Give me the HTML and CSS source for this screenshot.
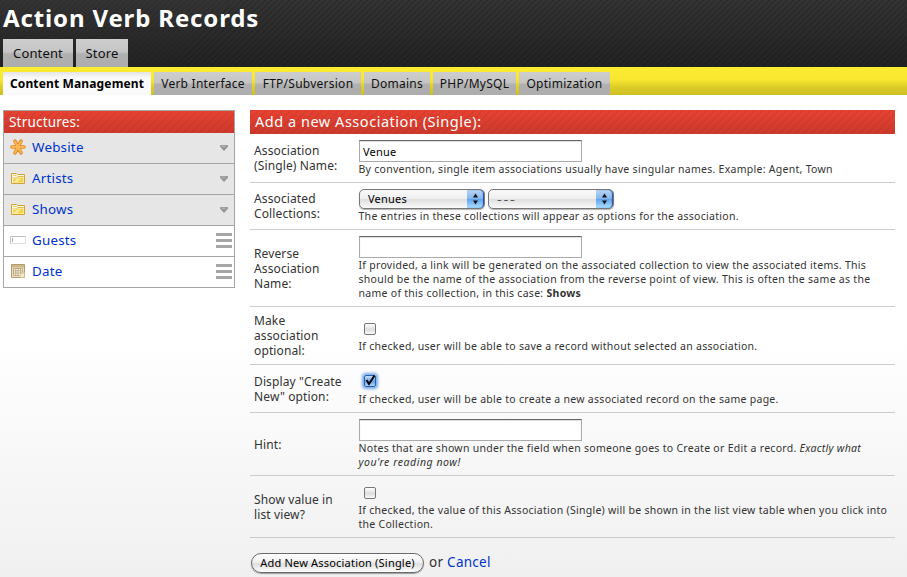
FILE: index.html
```html
<!DOCTYPE html>
<html lang="en">
<head>
<meta charset="utf-8">
<title>Action Verb Records</title>
<link rel="stylesheet" href="styles.css">
</head>
<body>
<header class="masthead">
  <h1 class="site-title">Action Verb Records</h1>
  <nav class="main-tabs">
    <a class="tab t-content"><span>Content</span></a>
    <a class="tab t-store"><span>Store</span></a>
  </nav>
</header>
<nav class="sub-tabs">
  <a class="tab active s-content"><span>Content Management</span></a>
  <a class="tab s-verb"><span>Verb Interface</span></a>
  <a class="tab s-ftp"><span>FTP/Subversion</span></a>
  <a class="tab s-domains"><span>Domains</span></a>
  <a class="tab s-php"><span>PHP/MySQL</span></a>
  <a class="tab s-opt"><span>Optimization</span></a>
</nav>
<main class="columns">
  <aside class="structures">
    <h2 class="bar">Structures:</h2>
    <ul class="tree">
      <li class="group">
        <svg class="icon" viewBox="0 0 16 16"><g stroke="#e08a2c" stroke-width="3.600" stroke-linecap="round"><path d="M2 8h12M5 2.200l6 11.600M11 2.200L5 13.800"/></g><g stroke="#fdb64e" stroke-width="2" stroke-linecap="round"><path d="M2.200 8h11.600M5 2.500l6 11M11 2.500L5 13.500"/></g></svg>
        <a>Website</a>
        <svg class="arrow" viewBox="0 0 8 6"><path d="M.5.5h7v1.200L4 5.500.5 1.700z" fill="#999" stroke="#777" stroke-width=".6"/><path d="M1.500 1.200h4" stroke="#ccc" stroke-width=".7"/></svg>
      </li>
      <li class="group">
        <svg class="icon" viewBox="0 0 16 16"><path d="M1.500 13.500v-10h5l1 1h7v9z" fill="#fffbe6" stroke="#d9a036"/><path d="M3 5h3.500l.5 1H3z" fill="#f2cf58"/><path d="M3 12.500V9h4l1-1.500h5.500v5z" fill="#f4d445"/><path d="M3 12.500l4-3.500 4-1-4 4.500z" fill="#fbeb9a"/><path d="M2.500 8h4.300l1-1.500h6" fill="none" stroke="#e3b443" stroke-width=".9"/></svg>
        <a>Artists</a>
        <svg class="arrow" viewBox="0 0 8 6"><path d="M.5.5h7v1.200L4 5.500.5 1.700z" fill="#999" stroke="#777" stroke-width=".6"/><path d="M1.500 1.200h4" stroke="#ccc" stroke-width=".7"/></svg>
      </li>
      <li class="group">
        <svg class="icon" viewBox="0 0 16 16"><path d="M1.500 13.500v-10h5l1 1h7v9z" fill="#fffbe6" stroke="#d9a036"/><path d="M3 5h3.500l.5 1H3z" fill="#f2cf58"/><path d="M3 12.500V9h4l1-1.500h5.500v5z" fill="#f4d445"/><path d="M3 12.500l4-3.500 4-1-4 4.500z" fill="#fbeb9a"/><path d="M2.500 8h4.300l1-1.500h6" fill="none" stroke="#e3b443" stroke-width=".9"/></svg>
        <a>Shows</a>
        <svg class="arrow" viewBox="0 0 8 6"><path d="M.5.5h7v1.200L4 5.500.5 1.700z" fill="#999" stroke="#777" stroke-width=".6"/><path d="M1.500 1.200h4" stroke="#ccc" stroke-width=".7"/></svg>
      </li>
      <li>
        <svg class="icon" viewBox="0 0 16 16"><path d="M.5 4.500h15v7H.5z" fill="#fff" stroke="#ddd"/><path d="M.5 11.500v-7h15" fill="none" stroke="#c2c2c2"/><path d="M2.500 6v4" stroke="#aaa"/></svg>
        <a>Guests</a>
        <i class="grip"></i>
      </li>
      <li>
        <svg class="icon" viewBox="0 0 16 16"><path d="M1.500 1.500h13v13h-13z" fill="#e9dfc3" stroke="#b59c6d"/><path d="M2 2h12v2.500H2z" fill="#cdb88c"/><path d="M3.500 5.500h9v7h-9z" fill="#fffdf4"/><path d="M3.500 5.500h9M3.500 7.800h9M3.500 10.100h9M3.500 12.400h6M3.500 5.500v7M5.800 5.500v7M8.100 5.500v7M10.400 5.500v5M12.500 5.500v4" stroke="#b59c6d" stroke-width=".8"/><path d="M10 14.500l1-4 3.500-1v5z" fill="#f3e8cb" stroke="#cdb88c" stroke-width=".7"/></svg>
        <a>Date</a>
        <i class="grip"></i>
      </li>
    </ul>
  </aside>
  <form class="editor">
    <h2 class="bar">Add a new Association (Single):</h2>
    <div class="row r-name">
      <label>Association<br>(Single) Name:</label>
      <div><input class="text" type="text" value="Venue">
        <p>By convention, single item associations usually have singular names. Example: Agent, Town</p></div>
    </div>
    <div class="row r-coll">
      <label>Associated<br>Collections:</label>
      <div><div class="popups">
          <span class="popup"><span class="value">Venues</span><svg class="stepper" viewBox="0 0 17 18"><path d="M8.500 3.500L11 7.500H6zM8.500 14.500L11 10.500H6z" fill="#111"/></svg></span>
          <span class="popup"><span class="value dashes">---</span><svg class="stepper" viewBox="0 0 17 18"><path d="M8.500 3.500L11 7.500H6zM8.500 14.500L11 10.500H6z" fill="#111"/></svg></span>
        </div>
        <p>The entries in these collections will appear as options for the association.</p></div>
    </div>
    <div class="row r-reverse">
      <label>Reverse<br>Association<br>Name:</label>
      <div><input class="text" type="text">
        <p>If provided, a link will be generated on the associated collection to view the associated items. This<br>should be the name of the association from the reverse point of view. This is often the same as the<br>name of this collection, in this case: <b>Shows</b></p></div>
    </div>
    <div class="row r-optional">
      <label>Make<br>association<br>optional:</label>
      <div><div class="check-line"><span class="check"></span></div>
        <p>If checked, user will be able to save a record without selected an association.</p></div>
    </div>
    <div class="row r-create">
      <label>Display "Create<br>New" option:</label>
      <div><div class="check-line"><span class="check on"><svg viewBox="0 0 16 16"><path d="M4.500 7l2.500 4L12.500 2.500" fill="none" stroke="#000" stroke-width="2"/></svg></span></div>
        <p>If checked, user will be able to create a new associated record on the same page.</p></div>
    </div>
    <div class="row r-hint">
      <label>Hint:</label>
      <div><input class="text" type="text">
        <p>Notes that are shown under the field when someone goes to Create or Edit a record. <em>Exactly what<br><span class="loose">you're reading now!</span></em></p></div>
    </div>
    <div class="row r-show">
      <label>Show value in<br>list view?</label>
      <div><div class="check-line"><span class="check"></span></div>
        <p>If checked, the value of this Association (Single) will be shown in the list view table when you click into<br>the Collection.</p></div>
    </div>
    <div class="actions">
      <button class="submit" type="button">Add New Association (Single)</button>
      <span class="or">or <a>Cancel</a></span>
    </div>
  </form>
</main>
</body>
</html>
```
FILE: styles.css
```css
* { box-sizing: border-box; }
body {
  margin: 0;
  height: 577px;
  overflow: hidden;
  font-family: "Noto Sans", "Open Sans", sans-serif;
  color: #333;
  background: linear-gradient(#fff 0, #fff 340px, #f0f0f0 577px);
}
h1, h2, p, ul { margin: 0; padding: 0; }
a { color: #0033cc; white-space: nowrap; }
.masthead {
  height: 67px;
  display: flex;
  flex-direction: column;
  justify-content: space-between;
  padding-left: 3px;
  background:
    repeating-linear-gradient(135deg, rgba(0,0,0,.13) 0 1.4px, transparent 1.4px 4.243px),
    linear-gradient(#333, #222);
}
.site-title {
  height: 36px;
  font-size: 24px;
  line-height: 35px;
  font-weight: 700;
  color: #fff;
  letter-spacing: .86px;
  white-space: nowrap;
}
.main-tabs, .sub-tabs { display: flex; gap: 3px; }
.tab {
  display: flex;
  align-items: center;
  justify-content: center;
  color: #111;
  background: linear-gradient(#cdcdcd 0, #c6c6c6 45%, #b0b0b0 55%, #adadad 100%);
}
.main-tabs .tab { height: 28px; font-size: 13px; letter-spacing: .15px; }
.t-content { width: 70px; }
.t-store { width: 52px; }
.sub-tabs {
  height: 28px;
  padding: 5px 0 0 3px;
  background: linear-gradient(#fcec32 0, #f8e72f 45%, #d9ca27 75%, #cfc024 100%);
}
.sub-tabs .tab { height: 23px; font-size: 12px; letter-spacing: .25px; }
.sub-tabs .active { font-weight: 700; color: #000; letter-spacing: .14px; background: linear-gradient(#e4e4e4, #fafafa 6px); }
.s-content { width: 148px; }
.s-verb { width: 98px; }
.s-ftp { width: 106px; }
.s-domains { width: 66px; }
.s-php { width: 83px; }
.s-opt { width: 91px; }
.columns {
  display: grid;
  grid-template-columns: 232px 645px;
  column-gap: 15px;
  align-items: start;
  padding: 15px 0 0 3px;
}
.bar {
  padding-left: 5px;
  font-size: 14.5px;
  font-weight: 400;
  color: #fff;
  letter-spacing: .53px;
  background:
    repeating-linear-gradient(135deg, rgba(80,20,0,.14) 0 1.2px, transparent 1.2px 5.657px),
    linear-gradient(#e64232, #cc392b);
}
.structures { border: 1px solid #a5a5a5; background: #fff; }
.structures .bar { height: 22px; line-height: 22px; font-size: 13.5px; letter-spacing: .2px; }
.tree { list-style: none; }
.tree li {
  display: flex;
  align-items: center;
  height: 31px;
  padding: 0 6px;
  border-bottom: 1px solid #a5a5a5;
  font-size: 13.4px;
  letter-spacing: .2px;
}
.tree li:last-child { height: 30px; border-bottom: 0; }
.tree .group { background: #e6e6e6; }
.tree li a { flex: 1; position: relative; top: -1px; }
.icon { width: 16px; height: 16px; margin-right: 6px; position: relative; top: -1px; }
.arrow { width: 8px; height: 6px; }
.grip {
  width: 16px;
  height: 15px;
  margin: 0 -4px 1px 0;
  background: linear-gradient(#a6a6a6 0 2.6px, transparent 2.6px 6px, #a6a6a6 6px 8.6px, transparent 8.6px 12px, #a6a6a6 12px 14.6px, transparent 14.6px);
}
.editor .bar { height: 24px; line-height: 23px; }
.row {
  display: grid;
  grid-template-columns: 105px 1fr;
  align-items: center;
  padding: 6px 0 6px 4px;
  border-bottom: 1px solid #ccc;
}
.row label { font-size: 12px; line-height: 15px; letter-spacing: .12px; white-space: nowrap; }
.row p { font-size: 10.5px; line-height: 14px; letter-spacing: .28px; white-space: nowrap; margin-left: -.5px; }
.row .loose { letter-spacing: .55px; }
.r-name { height: 49px; }
.r-create { height: 48px; }
.r-coll { height: 47px; }
.r-reverse { height: 77px; }
.r-optional { height: 58px; }
.r-hint { height: 63px; }
.r-show { height: 62px; }
.text {
  display: block;
  width: 223px;
  height: 22px;
  padding: 0 3px;
  border: 1px solid #aaa;
  border-top: 1px solid #666;
  box-shadow: inset 0 1px 1px #ddd;
  background: #fff;
  color: #000;
  font: 11px/18px "Noto Sans", sans-serif;
  letter-spacing: .2px;
}
.popups { display: flex; gap: 3px; height: 20px; }
.popup {
  display: flex;
  justify-content: space-between;
  width: 126px;
  height: 20px;
  border: 1px solid #777;
  border-radius: 5px;
  background: linear-gradient(#fafafa, #eee 48%, #dedede 52%, #fafafa);
  box-shadow: 0 1px 1px rgba(0,0,0,.3);
}
.value { padding-left: 8px; font-size: 11px; line-height: 18px; color: #000; letter-spacing: .2px; }
.dashes { font-size: 15px; line-height: 17px; letter-spacing: 1.7px; font-weight: 300; color: #333; }
.stepper { width: 17px; height: 18px; border-radius: 0 4px 4px 0; background: linear-gradient(#b9d6f5, #86b6ee 48%, #62a3ec 52%, #a9e0ff); box-shadow: inset -1px 0 1px #2350a8; }
.check-line { height: 21px; padding: 5px 0 0 5px; }
.check {
  display: block;
  width: 12px;
  height: 12px;
  border: 1px solid #777;
  border-radius: 2px;
  background: linear-gradient(#fff, #ddd 55%, #fafafa);
}
.check.on { position: relative; top: -1px; border-color: #2b5ca8; background: linear-gradient(#c5ddf7, #6aa5e8 55%, #a5d6fb); box-shadow: 0 0 3px 2px #76a9e6; }
.check svg { display: block; width: 16px; height: 16px; margin: -3px 0 0 -3px; }
.actions { display: flex; align-items: center; gap: 5px; padding: 15px 0 0 1px; }
.submit {
  width: 173px;
  height: 20px;
  padding: 0 0 2px;
  border: 1.5px solid #6b6b6b;
  border-radius: 10px;
  background: linear-gradient(#fff, #f0f0f0 45%, #dedede 55%, #fff);
  box-shadow: 0 1px 1px rgba(0,0,0,.35);
  font: 11px "Noto Sans", sans-serif;
  letter-spacing: .2px;
  color: #000;
  white-space: nowrap;
}
.or { font-size: 13.5px; line-height: 16px; letter-spacing: .27px; white-space: nowrap; position: relative; top: -1px; }
```
